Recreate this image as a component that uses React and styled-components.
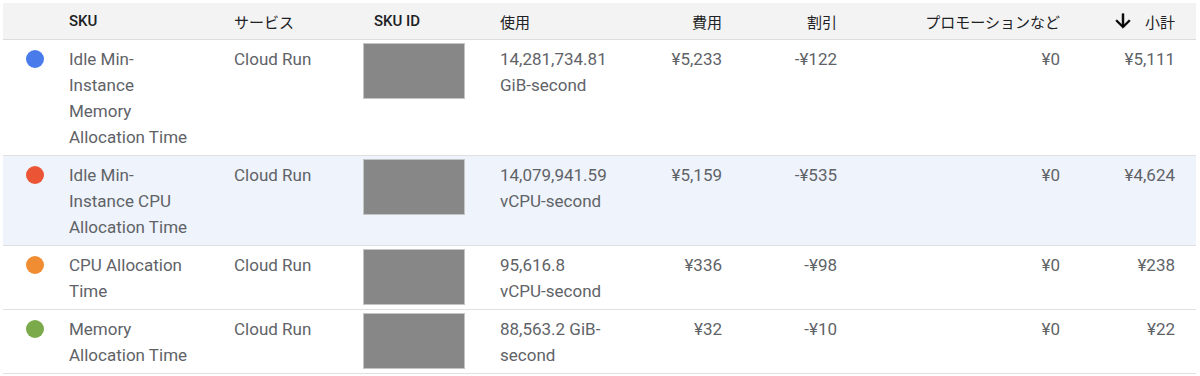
import React from "react";
import styled, { createGlobalStyle } from "styled-components";

const GlobalStyle = createGlobalStyle`
  html, body { margin: 0; padding: 0; background: #ffffff; }
  body { font-family: Roboto, "Noto Sans CJK JP", sans-serif; }
`;

const COLS = "50px 165px 129px 137px 142px 112px 115px 223px 120px";

const Page = styled.div`
  padding: 3px 4px 0 3px;
`;

const Table = styled.div`
  display: flex;
  flex-direction: column;
  width: 1193px;
`;

const HeaderRow = styled.div`
  display: grid;
  grid-template-columns: ${COLS};
  height: 36px;
  align-items: center;
  background: #f3f3f3;
  border-bottom: 1px solid #dcdcdc;
`;

const HeadCell = styled.div`
  display: flex;
  align-items: center;
  justify-content: ${(p) => (p.$align === "right" ? "flex-end" : "flex-start")};
  padding: 0 ${(p) => p.$pr ?? 16}px 0 ${(p) => p.$pl ?? 16}px;
  font-size: 15px;
  font-weight: ${(p) => (p.$bold ? 500 : 400)};
  color: #202124;
  font-family: ${(p) =>
    p.$bold ? 'Roboto, sans-serif' : '"Noto Sans CJK JP", Roboto, sans-serif'};
  white-space: nowrap;
`;

const SortIcon = styled.svg`
  width: 22px;
  height: 22px;
  margin-right: 11px;
`;

const Row = styled.div`
  display: grid;
  grid-template-columns: ${COLS};
  background: ${(p) => (p.$highlight ? "#eff3fb" : "#ffffff")};
  border-bottom: 1px solid #e0e0e0;
`;

const Cell = styled.div`
  padding: ${(p) => (p.$tight ? "3px" : "6px")} ${(p) => p.$pr ?? 16}px
    ${(p) => (p.$tight ? "0" : "5px")} ${(p) => p.$pl ?? 16}px;
  font-size: 17px;
  line-height: 26px;
  color: #5f6368;
  text-align: ${(p) => p.$align || "left"};
`;

const Dot = styled.span`
  display: block;
  width: 18px;
  height: 18px;
  border-radius: 50%;
  margin-top: 4px;
  background: ${(p) => p.$color};
`;

const IdBlock = styled.div`
  width: 102px;
  height: 56px;
  box-sizing: border-box;
  background: #878787;
  border: 1px solid #c4c4c4;
`;

const rows = [
  {
    color: "#4a7beb",
    sku: "Idle Min-Instance Memory Allocation Time",
    usage: "14,281,734.81 GiB-second",
    cost: "¥5,233",
    discount: "-¥122",
    promo: "¥0",
    total: "¥5,111",
  },
  {
    color: "#eb5535",
    sku: "Idle Min-Instance CPU Allocation Time",
    usage: "14,079,941.59 vCPU-second",
    cost: "¥5,159",
    discount: "-¥535",
    promo: "¥0",
    total: "¥4,624",
    highlight: true,
  },
  {
    color: "#f08c32",
    sku: "CPU Allocation Time",
    usage: "95,616.8 vCPU-second",
    cost: "¥336",
    discount: "-¥98",
    promo: "¥0",
    total: "¥238",
  },
  {
    color: "#7aaa4a",
    sku: "Memory Allocation Time",
    usage: "88,563.2 GiB-second",
    cost: "¥32",
    discount: "-¥10",
    promo: "¥0",
    total: "¥22",
  },
];

export default function App() {
  return (
    <Page>
      <GlobalStyle />
      <Table>
        <HeaderRow>
          <HeadCell />
          <HeadCell $bold>SKU</HeadCell>
          <HeadCell>サービス</HeadCell>
          <HeadCell $bold $pl={27}>SKU ID</HeadCell>
          <HeadCell>使用</HeadCell>
          <HeadCell $align="right">費用</HeadCell>
          <HeadCell $align="right">割引</HeadCell>
          <HeadCell $align="right">プロモーションなど</HeadCell>
          <HeadCell $align="right" $pr={21}>
            <SortIcon viewBox="0 0 24 24">
              <path
                fill="#000"
                stroke="#000"
                strokeWidth="0.6"
                d="M20 12l-1.41-1.41L13 16.17V4h-2v12.17l-5.58-5.59L4 12l8 8 8-8z"
              />
            </SortIcon>
            小計
          </HeadCell>
        </HeaderRow>
        {rows.map((r) => (
          <Row key={r.sku} $highlight={r.highlight}>
            <Cell $pl={23} $pr={9}>
              <Dot $color={r.color} />
            </Cell>
            <Cell $pr={27}>{r.sku}</Cell>
            <Cell>Cloud Run</Cell>
            <Cell $tight>
              <IdBlock />
            </Cell>
            <Cell $pr={24}>{r.usage}</Cell>
            <Cell $align="right">{r.cost}</Cell>
            <Cell $align="right">{r.discount}</Cell>
            <Cell $align="right">{r.promo}</Cell>
            <Cell $align="right" $pr={21}>{r.total}</Cell>
          </Row>
        ))}
      </Table>
    </Page>
  );
}
